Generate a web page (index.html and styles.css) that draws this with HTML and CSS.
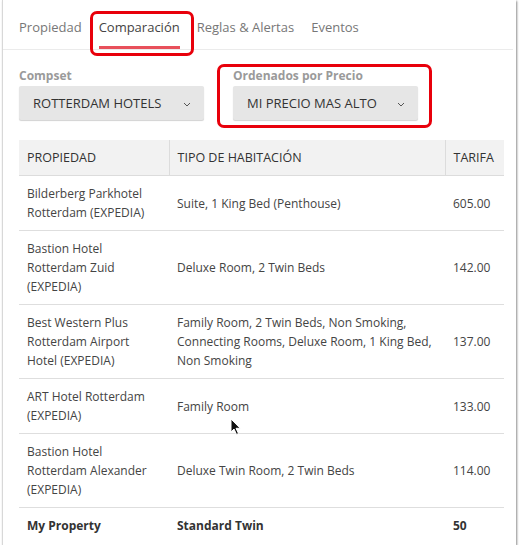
FILE: index.html
```html
<!DOCTYPE html>
<html lang="es">
<head>
<meta charset="utf-8">
<link rel="stylesheet" href="styles.css">
</head>
<body>
<div class="card">
  <nav class="tabs">
    <span class="tab">Propiedad</span>
    <span class="tab active">Comparación</span>
    <span class="tab">Reglas &amp; Alertas</span>
    <span class="tab">Eventos</span>
  </nav>
  <div class="filters">
    <div class="field">
      <label class="label">Compset</label>
      <div class="select"><span>ROTTERDAM HOTELS</span><svg class="chev" width="8" height="5" viewBox="0 0 8 5"><path d="M1 1l3 3 3-3" fill="none" stroke="#555" stroke-width="1"/></svg></div>
    </div>
    <div class="field">
      <label class="label">Ordenados por Precio</label>
      <div class="select"><span>MI PRECIO MAS ALTO</span><svg class="chev" width="8" height="5" viewBox="0 0 8 5"><path d="M1 1l3 3 3-3" fill="none" stroke="#555" stroke-width="1"/></svg></div>
    </div>
  </div>
  <table class="grid">
    <colgroup><col class="c1"><col class="c2"><col class="c3"></colgroup>
    <thead>
      <tr><th>PROPIEDAD</th><th>TIPO DE HABITACIÓN</th><th>TARIFA</th></tr>
    </thead>
    <tbody>
      <tr><td>Bilderberg Parkhotel<br>Rotterdam (EXPEDIA)</td><td>Suite, 1 King Bed (Penthouse)</td><td>605.00</td></tr>
      <tr><td>Bastion Hotel<br>Rotterdam Zuid<br>(EXPEDIA)</td><td>Deluxe Room, 2 Twin Beds</td><td>142.00</td></tr>
      <tr><td>Best Western Plus<br>Rotterdam Airport<br>Hotel (EXPEDIA)</td><td>Family Room, 2 Twin Beds, Non Smoking,<br>Connecting Rooms, Deluxe Room, 1 King Bed,<br>Non Smoking</td><td>137.00</td></tr>
      <tr><td>ART Hotel Rotterdam<br>(EXPEDIA)</td><td>Family Room</td><td>133.00</td></tr>
      <tr><td>Bastion Hotel<br>Rotterdam Alexander<br>(EXPEDIA)</td><td>Deluxe Twin Room, 2 Twin Beds</td><td>114.00</td></tr>
      <tr class="mine"><td>My Property</td><td>Standard Twin</td><td>50</td></tr>
    </tbody>
  </table>
  <div class="mark mark-tab"></div>
  <div class="mark mark-sort"></div>
  <svg class="cursor" width="12" height="18" viewBox="0 0 12 18"><path d="M1 1v13l3-3 2.5 5.5 2-1-2.5-5.2h4.2z" fill="#111" stroke="#fff" stroke-width="1"/></svg>
</div>
</body>
</html>
```
FILE: styles.css
```css
html, body { margin: 0; padding: 0; background: #fff; }
body { font-family: "Open Sans", "Liberation Sans", sans-serif; color: #444; }
.card {
  position: relative;
  margin-left: 2px;
  width: 514px;
  height: 545px;
  border-left: 1px solid #d8d8d8;
  box-shadow: 1px 1px 2px rgba(0,0,0,0.45);
  background: #fff;
  box-sizing: border-box;
}
.tabs {
  display: flex;
  gap: 17px;
  padding-left: 16px;
  height: 50px;
  border-bottom: 1px solid #ebebeb;
  box-sizing: border-box;
  margin-right: 3px;
}
.tab {
  font-size: 13px;
  color: #777;
  padding-top: 18px;
  box-sizing: border-box;
  height: 49px;
  border-bottom: 3px solid transparent;
}
.tab.active { color: #444; border-bottom-color: #e8505b; }
.filters {
  display: flex;
  gap: 29px;
  padding: 17px 0 0 16px;
}
.field { display: flex; flex-direction: column; width: 185px; }
.label { font-size: 12px; font-weight: 700; color: #9a9a9a; line-height: 17px; height: 19px; }
.select {
  height: 34px;
  background: #e6e6e6;
  border-radius: 2px;
  box-shadow: 0 1px 1px rgba(0,0,0,0.18);
  display: flex;
  align-items: center;
  justify-content: space-between;
  padding: 0 13px 0 14px;
  font-size: 13px;
  color: #333;
}
.chev { margin-top: 2px; }
.grid {
  margin: 20px 0 0 16px;
  border-collapse: collapse;
  width: 485px;
  table-layout: fixed;
  font-size: 12px;
}
.c1 { width: 150px; }
.c2 { width: 276px; }
.c3 { width: 59px; }
.grid th {
  background: #f2f2f2;
  text-align: left;
  font-weight: 400;
  color: #333;
  font-size: 12.5px;
  height: 35px;
  padding: 0 8px;
  border-left: 1px solid #dcdcdc;
  border-bottom: 1px solid #dcdcdc;
}
.grid th:first-child { border-left: none; }
.grid td {
  padding: 8px 8px;
  line-height: 19px;
  vertical-align: middle;
  border-bottom: 1px solid #dedede;
  color: #444;
  white-space: nowrap;
}
.grid tr.mine td { font-weight: 700; color: #333; border-bottom: none; }
.mark {
  position: absolute;
  border: 3px solid #e8000b;
  border-radius: 7px;
  box-sizing: border-box;
}
.mark-tab { left: 87px; top: 11px; width: 104px; height: 45px; }
.mark-sort { left: 214px; top: 64px; width: 215px; height: 64px; }
.cursor { position: absolute; left: 227px; top: 418px; }
```
